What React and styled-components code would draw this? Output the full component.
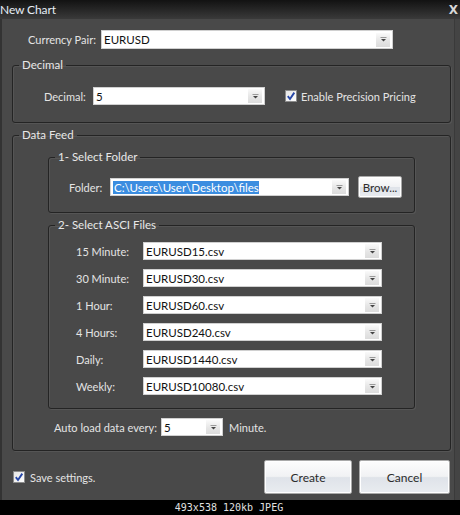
import React from "react";
import styled, { createGlobalStyle } from "styled-components";

const Global = createGlobalStyle`
  html, body { margin: 0; padding: 0; background: #000; }
  body { font-family: Lato, "Open Sans", sans-serif; }
  * { box-sizing: border-box; }
`;

const Frame = styled.div`
  width: 460px;
  height: 515px;
  display: flex;
  flex-direction: column;
  overflow: hidden;
  background: #000;
`;

const TitleBar = styled.div`
  height: 19px;
  flex: none;
  display: flex;
  align-items: center;
  justify-content: space-between;
  background: linear-gradient(#121212, #2a2a2a 60%, #3a3a3a);
  color: #e6edf5;
  font-size: 12px;
  padding: 0 2px 0 0;
`;

const TitleText = styled.span`
  margin-left: 0;
  letter-spacing: -0.1px;
`;

const CloseX = styled.span`
  font-weight: 700;
  font-size: 12px;
  color: #d8d8d8;
  font-family: "DejaVu Sans", sans-serif;
`;

const Body = styled.div`
  height: 481px;
  flex: none;
  background: #494949;
  padding: 0 9px 0 12px;
  display: flex;
  flex-direction: column;
  box-shadow: inset 2px 0 0 #333, inset -5px 0 0 #444, inset -6px 0 0 #3a3a3a;
`;

const Caption = styled.div`
  height: 15px;
  flex: none;
  text-align: center;
  color: #e0e0e0;
  font-family: "DejaVu Sans Mono", monospace;
  font-size: 10px;
  line-height: 16px;
  padding-right: 2px;
`;

const Row = styled.div`
  display: flex;
  align-items: center;
  height: ${(p) => p.$h || 18}px;
  margin-left: ${(p) => p.$indent || 0}px;
  margin-top: ${(p) => p.$mt || 0}px;
`;

const Label = styled.span`
  width: ${(p) => p.$w}px;
  flex: none;
  color: #e4e4e4;
  font-size: 11px;
  white-space: nowrap;
`;

const Text = styled.span`
  color: #e4e4e4;
  font-size: 11px;
  margin-left: ${(p) => p.$ml || 0}px;
  white-space: nowrap;
`;

const Combo = styled.div`
  width: ${(p) => p.$w}px;
  height: ${(p) => p.$h || 18}px;
  flex: none;
  background: #fff;
  border: 1px solid #d0d0d0;
  display: flex;
  align-items: center;
  padding-left: 2px;
`;

const Value = styled.span`
  flex: 1;
  color: #111;
  font-size: 11.5px;
  white-space: nowrap;
  overflow: hidden;
`;

const Selected = styled.span`
  background: #3b8de0;
  color: #fff;
  padding: 1px 0 1px 1px;
  font-size: 11.5px;
`;

const ArrowBox = styled.span`
  width: 14px;
  height: 14px;
  margin-right: 2px;
  flex: none;
  display: flex;
  align-items: center;
  justify-content: center;
  background: linear-gradient(#fafafa, #e6e6e6 55%, #dcdcdc);
`;

const Arrow = () => (
  <ArrowBox>
    <svg width="7" height="5" viewBox="0 0 7 5">
      <rect x="0.5" y="0" width="6" height="1" fill="#9a9a9a" />
      <path d="M1 2 L6 2 L3.5 4.5 Z" fill="#444" />
    </svg>
  </ArrowBox>
);

const Group = styled.fieldset`
  margin: ${(p) => p.$mt || 0}px 0 0 ${(p) => p.$ml || 0}px;
  width: ${(p) => p.$w}px;
  padding: ${(p) => p.$pt}px 6px ${(p) => p.$pb}px 6px;
  border: 1px solid #242424;
  border-radius: 3px;
  box-shadow: 1px 1px 0 rgba(255, 255, 255, 0.07),
    inset 1px 1px 0 rgba(255, 255, 255, 0.07);
  min-width: 0;
`;

const Legend = styled.legend`
  padding: 0 3px;
  font-size: 11.5px;
  line-height: 14px;
  color: #e8e8e8;
`;

const CheckWrap = styled.span`
  display: inline-flex;
  width: 12px;
  height: 12px;
  flex: none;
  margin-left: ${(p) => p.$ml || 0}px;
`;

const Check = ({ ml }) => (
  <CheckWrap $ml={ml}>
    <svg width="12" height="12" viewBox="0 0 12 12">
      <defs>
        <linearGradient id="cbg" x1="0" y1="0" x2="1" y2="1">
          <stop offset="0" stopColor="#e4e4e4" />
          <stop offset="1" stopColor="#ffffff" />
        </linearGradient>
      </defs>
      <rect x="0.5" y="0.5" width="11" height="11" fill="url(#cbg)" stroke="#8c8c8c" />
      <path d="M2.8 6.2 L5 9 L9.3 2.6" fill="none" stroke="#2747a8" strokeWidth="1.9" />
    </svg>
  </CheckWrap>
);

const Button = styled.button`
  width: ${(p) => p.$w}px;
  height: ${(p) => p.$h}px;
  margin-left: ${(p) => p.$ml || 0}px;
  flex: none;
  border: 1px solid #a9a9a9;
  border-radius: 2px;
  background: linear-gradient(#fdfdfd, #f1f2f4 48%, #dfe3e9 52%, #e9ecf0);
  color: #2c2c2c;
  font-family: Lato, "Open Sans", sans-serif;
  font-size: ${(p) => p.$fs || 12}px;
  padding: 0;
  box-shadow: inset 0 0 0 1px #ffffff;
`;

const Spacer = styled.div`
  flex: ${(p) => (p.$w ? "none" : 1)};
  width: ${(p) => (p.$w ? `${p.$w}px` : "auto")};
`;

const files = [
  ["15 Minute:", "EURUSD15.csv"],
  ["30 Minute:", "EURUSD30.csv"],
  ["1 Hour:", "EURUSD60.csv"],
  ["4 Hours:", "EURUSD240.csv"],
  ["Daily:", "EURUSD1440.csv"],
  ["Weekly:", "EURUSD10080.csv"],
];

export default function App() {
  return (
    <Frame>
      <Global />
      <TitleBar>
        <TitleText>New Chart</TitleText>
        <CloseX>X</CloseX>
      </TitleBar>
      <Body>
        <Row $h={19} $mt={11} $indent={16}>
          <Label $w={73}>Currency Pair:</Label>
          <Combo $w={292} $h={19}>
            <Value>EURUSD</Value>
            <Arrow />
          </Combo>
        </Row>

        <Group $mt={9} $w={439} $pt={15} $pb={17}>
          <Legend>Decimal</Legend>
          <Row $indent={25}>
            <Label $w={49}>Decimal:</Label>
            <Combo $w={172}>
              <Value>5</Value>
              <Arrow />
            </Combo>
            <Check ml={20} />
            <Text $ml={4}>Enable Precision Pricing</Text>
          </Row>
        </Group>

        <Group $mt={5} $w={439} $pt={8} $pb={14}>
          <Legend>Data Feed</Legend>
          <Group $ml={29} $w={367} $pt={12} $pb={14}>
            <Legend>1- Select Folder</Legend>
            <Row $h={22} $indent={14}>
              <Label $w={41}>Folder:</Label>
              <Combo $w={239}>
                <Value>
                  <Selected>C:\Users\User\Desktop\files</Selected>
                </Value>
                <Arrow />
              </Combo>
              <Button $w={44} $h={22} $ml={9} $fs={11.5}>
                Brow...
              </Button>
            </Row>
          </Group>

          <Group $mt={5} $ml={29} $w={367} $pt={10} $pb={13}>
            <Legend>2- Select ASCI Files</Legend>
            {files.map(([label, file], i) => (
              <Row key={label} $indent={21} $mt={i === 0 ? 0 : 9}>
                <Label $w={67}>{label}</Label>
                <Combo $w={239}>
                  <Value>{file}</Value>
                  <Arrow />
                </Combo>
              </Row>
            ))}
          </Group>

          <Row $indent={35} $mt={9}>
            <Label $w={107}>Auto load data every:</Label>
            <Combo $w={62}>
              <Value>5</Value>
              <Arrow />
            </Combo>
            <Text $ml={6}>Minute.</Text>
          </Row>
        </Group>

        <Row $h={34} $mt={9}>
          <Check ml={1} />
          <Text $ml={5}>Save settings.</Text>
          <Spacer />
          <Button $w={88} $h={34}>Create</Button>
          <Button $w={91} $h={34} $ml={7}>Cancel</Button>
          <Spacer $w={1} />
        </Row>
      </Body>
      <Caption>493x538 120kb JPEG</Caption>
    </Frame>
  );
}
